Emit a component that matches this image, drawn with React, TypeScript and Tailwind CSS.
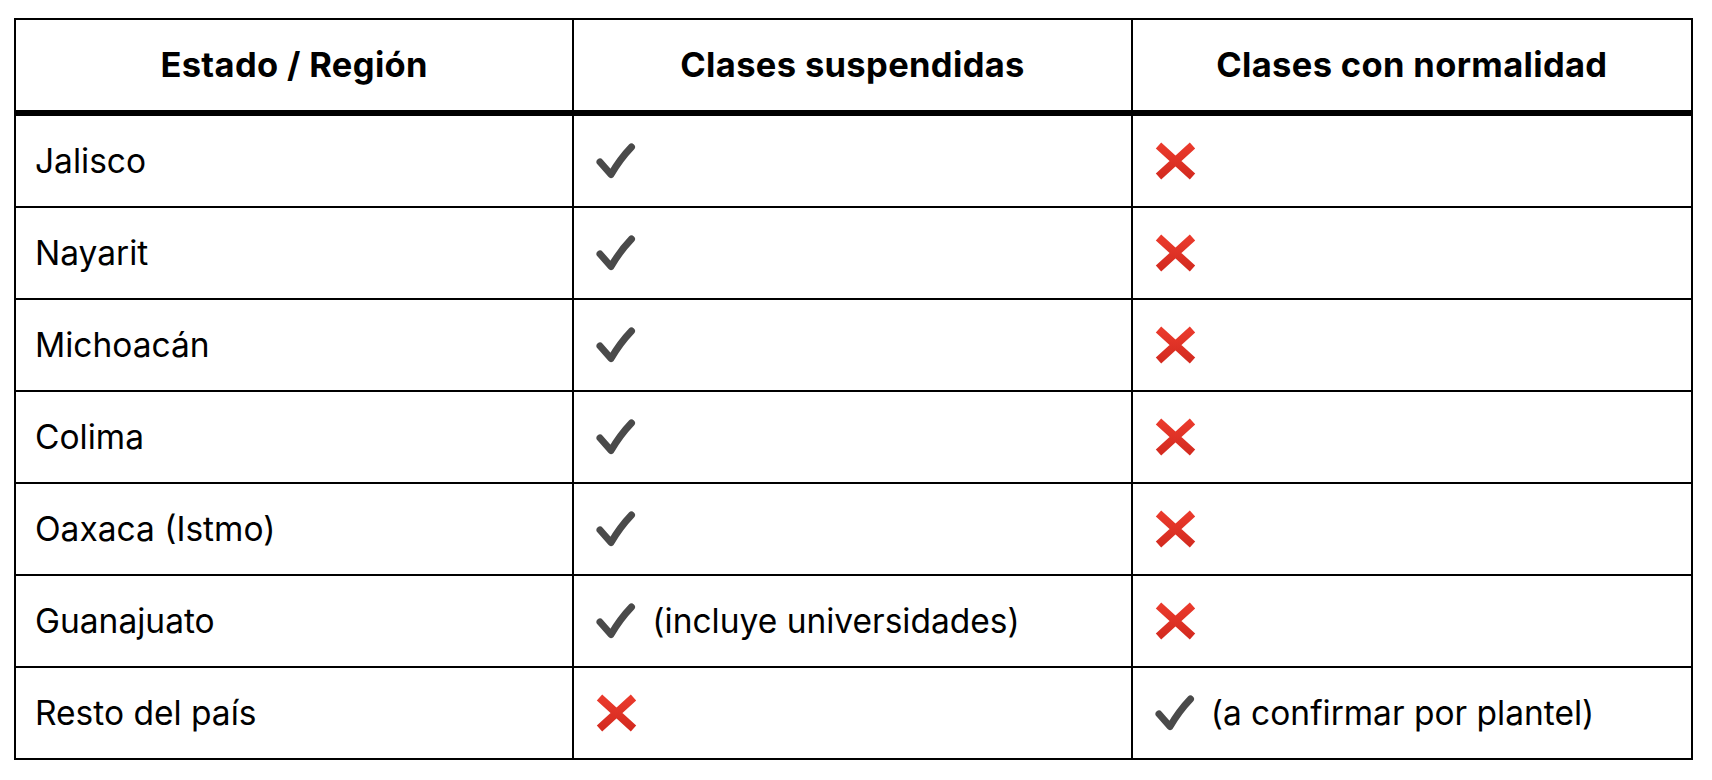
import React from "react";

type Mark = "yes" | "no";

const rows: { region: string; suspended: Mark; suspendedNote?: string; normal: Mark; normalNote?: string }[] = [
  { region: "Jalisco", suspended: "yes", normal: "no" },
  { region: "Nayarit", suspended: "yes", normal: "no" },
  { region: "Michoacán", suspended: "yes", normal: "no" },
  { region: "Colima", suspended: "yes", normal: "no" },
  { region: "Oaxaca (Istmo)", suspended: "yes", normal: "no" },
  { region: "Guanajuato", suspended: "yes", suspendedNote: "(incluye universidades)", normal: "no" },
  { region: "Resto del país", suspended: "no", normal: "yes", normalNote: "(a confirmar por plantel)" },
];

function Check() {
  return (
    <svg width="40" height="36" viewBox="0 0 40 36" className="shrink-0">
      <path
        d="M4 19 L15 31.5 Q24 16 35.5 4"
        fill="none"
        stroke="#4a4a4a"
        strokeWidth="7"
        strokeLinecap="round"
        strokeLinejoin="round"
      />
    </svg>
  );
}

function Cross() {
  return (
    <svg width="41" height="38" viewBox="0 0 41 38" className="shrink-0">
      <defs>
        <linearGradient id="xred" x1="0" y1="0" x2="0" y2="1">
          <stop offset="0" stopColor="#ea3a2c" />
          <stop offset="1" stopColor="#d42b20" />
        </linearGradient>
      </defs>
      <path d="M3.5 3.5 L37.5 34.5 M37.5 3.5 L3.5 34.5" fill="none" stroke="url(#xred)" strokeWidth="8" strokeLinecap="butt" />
    </svg>
  );
}

function MarkCell({ mark, note, last }: { mark: Mark; note?: string; last?: boolean }) {
  return (
    <div className={`flex items-center gap-[16px] px-[22px] border-black ${last ? "" : "border-r-2"}`}>
      {mark === "yes" ? <Check /> : <Cross />}
      {note && <span>{note}</span>}
    </div>
  );
}

export default function App() {
  return (
    <div className="min-h-screen bg-white pl-[14px] pt-[18px] font-['Inter',sans-serif] text-[33.5px] text-black">
      <div className="w-[1679px] border-2 border-black">
        <div className="grid grid-cols-3 h-[96px] border-b-[6px] border-black font-bold text-[34.5px] tracking-[0.01em]">
          <div className="flex items-center justify-center border-r-2 border-black">Estado / Región</div>
          <div className="flex items-center justify-center border-r-2 border-black">Clases suspendidas</div>
          <div className="flex items-center justify-center">Clases con normalidad</div>
        </div>
        {rows.map((r, i) => (
          <div
            key={r.region}
            className={`grid grid-cols-3 border-black ${i < rows.length - 1 ? "h-[92px] border-b-2" : "h-[90px]"}`}
          >
            <div className="flex items-center px-[19px] border-r-2 border-black">{r.region}</div>
            <MarkCell mark={r.suspended} note={r.suspendedNote} />
            <MarkCell mark={r.normal} note={r.normalNote} last />
          </div>
        ))}
      </div>
    </div>
  );
}
